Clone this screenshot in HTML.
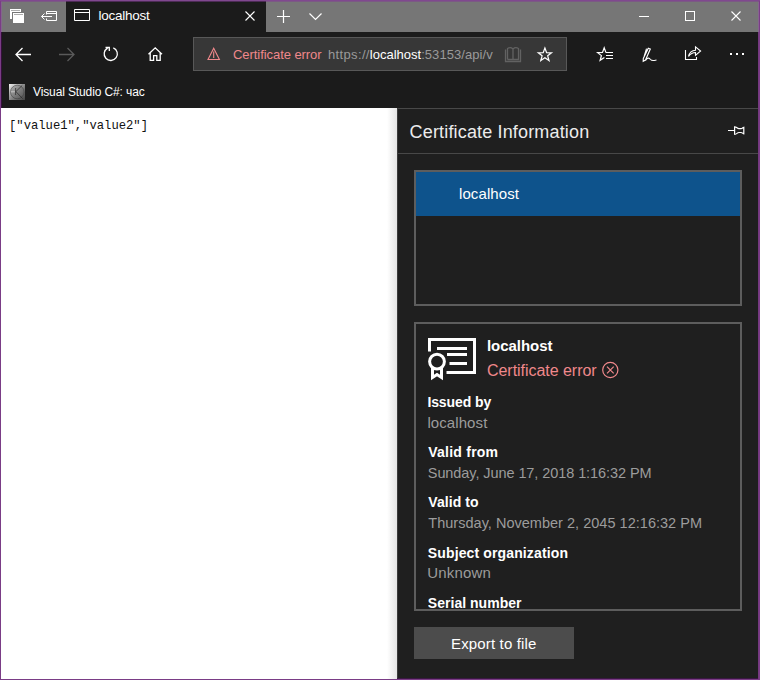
<!DOCTYPE html>
<html><head><meta charset="utf-8"><title>localhost</title>
<style>
html,body{margin:0;padding:0;background:#fff;}
body{width:760px;height:681px;overflow:hidden;position:relative;font-family:"Liberation Sans",sans-serif;}
.a{position:absolute;}
.t{position:absolute;white-space:nowrap;line-height:1;}
svg{position:absolute;left:0;top:0;overflow:visible;}
</style></head><body>
<!-- window frame -->
<div class="a" id="win" style="left:0;top:0;width:760px;height:680px;background:#7a3c86;"></div>
<div class="a" style="left:0;top:0;width:760px;height:1px;background:#80488f;"></div>
<!-- title bar gray -->
<div class="a" style="left:1px;top:1px;width:758px;height:31px;background:#767676;"></div>
<!-- active tab + toolbar dark -->
<div class="a" style="left:66px;top:1px;width:200px;height:31px;background:#1b1b1b;"></div>
<div class="a" style="left:1px;top:32px;width:758px;height:76px;background:#1b1b1b;"></div>
<!-- page -->
<div class="a" style="left:1px;top:108px;width:396px;height:571px;background:#fff;"></div>
<div class="a" style="left:387px;top:108px;width:10px;height:571px;background:linear-gradient(to right,#fff,#e5e5e5);"></div>
<div class="t" id="json" style="left:9px;top:119.6px;font-family:'Liberation Mono',monospace;font-size:12.2px;color:#111;">["value1","value2"]</div>
<!-- address bar -->
<div class="a" style="left:193px;top:37px;width:374px;height:34px;box-sizing:border-box;background:#373737;border:1px solid #585858;"></div>
<div class="t" id="cerr1" style="left:233px;top:48px;font-size:13px;color:#f0888b;letter-spacing:-0.06px;">Certificate error</div>
<div class="t" id="url" style="left:328px;top:48px;font-size:13px;color:#9a9a9a;"><span id="u1" style="letter-spacing:0.35px">https://</span><span id="u2" style="color:#fff">localhost</span><span id="u3" style="letter-spacing:0.07px">:53153/api/v</span></div>
<!-- tab title -->
<div class="t" id="tabt" style="left:98.6px;top:8.5px;font-size:13.5px;color:#fff;letter-spacing:-0.28px;">localhost</div>
<!-- bookmark -->
<div class="a" style="left:9px;top:84px;width:16px;height:16px;background:linear-gradient(135deg,#f4f4f4 0%,#b4b4b4 28%,#7c7c7c 58%,#404040 100%);"></div>
<div class="t" id="bm" style="left:33px;top:86px;font-size:12px;color:#fff;letter-spacing:-0.12px;">Visual Studio C#: час</div>
<!-- panel -->
<div class="a" style="left:397px;top:108px;width:362px;height:571px;background:#1f1f1f;"></div>
<div class="a" style="left:397px;top:108px;width:362px;height:1px;background:#484848;"></div>
<div class="a" style="left:397px;top:108px;width:1px;height:571px;background:#3c3c3c;"></div>
<div class="a" style="left:398px;top:153px;width:361px;height:1px;background:#484848;"></div>
<div class="t" id="hdr" style="left:409.6px;top:123px;font-size:18px;color:#ececec;letter-spacing:0.16px;">Certificate Information</div>
<!-- chain list -->
<div class="a" style="left:414px;top:170px;width:328px;height:136px;box-sizing:border-box;border:2px solid #5d5d5d;"></div>
<div class="a" style="left:416px;top:172px;width:324px;height:44px;background:#0e538c;"></div>
<div class="t" id="l1" style="left:459px;top:186px;font-size:15px;color:#fff;letter-spacing:0.09px;">localhost</div>
<!-- details -->
<div class="a" style="left:414px;top:322px;width:328px;height:289px;box-sizing:border-box;border:2px solid #5d5d5d;overflow:hidden;">
</div>
<div class="t" id="d0" style="left:487px;top:338px;font-size:15px;font-weight:bold;color:#fff;letter-spacing:-0.05px;">localhost</div>
<div class="t" id="d1" style="left:487px;top:363px;font-size:16px;color:#f0888b;letter-spacing:-0.04px;">Certificate error</div>
<div class="t" id="k1" style="left:427.4px;top:395px;font-size:14px;font-weight:bold;color:#fff;letter-spacing:-0.1px;">Issued by</div>
<div class="t" id="v1" style="left:427.4px;top:415px;font-size:15px;color:#9c9c9c;letter-spacing:0.09px;">localhost</div>
<div class="t" id="k2" style="left:428.3px;top:445px;font-size:14px;font-weight:bold;color:#fff;letter-spacing:0.23px;">Valid from</div>
<div class="t" id="v2" style="left:427.8px;top:466px;font-size:14.5px;color:#9c9c9c;letter-spacing:-0.08px;">Sunday, June 17, 2018 1:16:32 PM</div>
<div class="t" id="k3" style="left:428.3px;top:495px;font-size:14px;font-weight:bold;color:#fff;letter-spacing:0.07px;">Valid to</div>
<div class="t" id="v3" style="left:428.3px;top:516px;font-size:14.5px;color:#9c9c9c;letter-spacing:0.02px;">Thursday, November 2, 2045 12:16:32 PM</div>
<div class="t" id="k4" style="left:427.8px;top:546px;font-size:14px;font-weight:bold;color:#fff;letter-spacing:0.13px;">Subject organization</div>
<div class="t" id="v4" style="left:427.3px;top:565px;font-size:15px;color:#9c9c9c;letter-spacing:0.18px;">Unknown</div>
<div class="t" id="k5" style="left:427.8px;top:596px;font-size:14px;font-weight:bold;color:#fff;height:13px;overflow:hidden;letter-spacing:0.03px;">Serial number</div>
<!-- button -->
<div class="a" style="left:414px;top:627px;width:160px;height:32px;background:#4c4c4c;"></div>
<div class="t" id="btn" style="left:451px;top:636px;font-size:15px;color:#fff;letter-spacing:0.15px;">Export to file</div>
<div class="a" style="left:1px;top:1px;width:758px;height:1px;background:rgba(128,60,145,.5);"></div>
<div class="a" style="left:758px;top:2px;width:1px;height:30px;background:rgba(150,80,170,.5);"></div>
<div class="a" style="left:758px;top:32px;width:1px;height:647px;background:#74397f;"></div>
<div class="a" style="left:1px;top:2px;width:1px;height:30px;background:rgba(150,80,170,.45);"></div>
<div class="a" style="left:1px;top:32px;width:1px;height:76px;background:rgba(70,10,80,.6);"></div>
<div class="a" style="left:397px;top:678px;width:361px;height:1px;background:#3a1742;"></div>
<!-- ICONS -->
<svg id="icons" width="760" height="681" viewBox="0 0 760 681" fill="none" stroke="#fff" stroke-width="1">
<!-- favicon detail -->
<g stroke-width="1">
<circle cx="17.3" cy="92" r="6.8" fill="#6a6a6a" fill-opacity=".3" stroke="#333" stroke-opacity=".7" stroke-width=".7"/>
<path d="M10.8 91.7H15" stroke="#c8c8c8" stroke-opacity=".7" stroke-width="1.3"/>
<path d="M15.6 88V95M22.3 85.3L15.9 91.6L22.6 98.6" stroke="#222" stroke-opacity=".75" stroke-width=".9"/>
</g>
<!-- tabs icon -->
<g stroke="none" fill="#fff">
<rect x="10" y="9" width="11" height="10"/>
<rect x="12" y="12" width="13" height="12" fill="#767676"/>
<rect x="13" y="13" width="11" height="10"/>
<rect x="11" y="10" width="9" height="1" fill="#767676" opacity=".6"/>
<rect x="14" y="14" width="9" height="1" fill="#767676" opacity=".6"/>
</g>
<!-- set aside icon -->
<path d="M46.5 14.5V11.5H56.5V20.5H46.5V18.5M46.5 13.5H56.5M41.5 16.5H52M44.5 13.5L41.5 16.5L44.5 19.5" />
<!-- tab page icon -->
<path d="M74.5 9.5H89.5V20.5H74.5ZM74.5 12.5H89.5"/>
<!-- tab close -->
<path d="M245.5 11.5L254.5 20.5M254.5 11.5L245.5 20.5" stroke-width="1.1"/>
<!-- new tab plus -->
<path d="M277 16.5H290M283.5 10V23" stroke-width="1.2"/>
<!-- chevron -->
<path d="M309.5 13.5L315.5 19.5L321.5 13.5" stroke-width="1.2"/>
<!-- window controls -->
<path d="M639 16.5H649"/>
<rect x="685.5" y="11.5" width="9" height="9"/>
<path d="M731.5 11.5L740.5 20.5M740.5 11.5L731.5 20.5" stroke-width="1.1"/>
<!-- back -->
<path d="M16 54.5H31M22.5 48L16 54.5L22.5 61" stroke-width="1.3"/>
<!-- forward -->
<path d="M59 54.5H74M67.5 48L74 54.5L67.5 61" stroke-width="1.3" stroke="#5a5a5a"/>
<!-- refresh -->
<path d="M113.3 47.8A6.6 6.6 0 1 1 107.6 48.1M105.5 47.5H109.3V51" stroke-width="1.3"/>
<!-- home -->
<path d="M148.5 54.2L155.2 47.8L162 54.2M150.2 53V60.3H153.6V55.6H156.8V60.3H160.2V53" stroke-width="1.3"/>
<!-- warning -->
<path d="M213.7 48.2L219.4 59.5H208L213.7 48.2ZM213.7 51.5V58" stroke="#f0888b" stroke-width="1.1"/>
<!-- book -->
<g stroke="#626262" stroke-width="1.3">
<path d="M505.5 49.5V61.5H520.5V49.5M507.5 59.5V48.5C509.5 47.3 511.5 47.6 513 49C514.5 47.6 516.5 47.3 518.5 48.5V59.5H507.5M513 49V59.5" />
</g>
<!-- star -->
<path d="M544.9 48.0L546.6 52.6L551.5 52.8L547.7 55.8L549.0 60.5L544.9 57.8L540.8 60.5L542.1 55.8L538.3 52.8L543.2 52.6Z" stroke-width="1.25" stroke-linejoin="miter"/>
<!-- fav list -->
<path d="M606 52.5L605.9 52.4L604.2 47.8L602.5 52.4L597.6 52.6L601.4 55.6L600.1 60.3L604.4 57.5M606 52.5H613M606 55.5H613M606 58.5H613" stroke-width="1.2"/>
<!-- pen -->
<path d="M648.3 48.2L650.3 49L645.5 60L643.2 61.2L643.3 58.5ZM646.5 48.7L644 57M645.5 60.5C647.5 57.5 649 57.5 650.5 59.5C652 61.3 654 60.5 656.5 60" stroke-width="1.15"/>
<!-- share -->
<path d="M685.5 50V59.5H696.5V57M688.5 56.5C689.5 52.5 692 50.5 695.5 50.3V46.8L700.6 51L695.5 55.4V52.5C692.5 52.5 690.5 53.8 688.5 56.5Z" stroke-width="1.1"/>
<!-- dots -->
<g stroke="none" fill="#fff"><rect x="730" y="53" width="2" height="2"/><rect x="736" y="53" width="2" height="2"/><rect x="742" y="53" width="2" height="2"/></g>
<!-- pin -->
<path d="M728 130.5H734M734.6 126.3V134.8M734.6 126.8C737 127 737 128.6 739 128.6H741C742.5 128.6 742.5 127.5 743.8 127.3V133.8C742.5 133.6 742.5 132.5 741 132.5H739C737 132.5 737 134.2 734.6 134.4" stroke-width="1.2"/>
<!-- cert icon -->
<g>
<path d="M429.5 351.5V339.5H474.5V372.5H446.5" stroke-width="3"/>
<path d="M437 348.5H467M447 354.5H467M449.5 363.5H467" stroke-width="3"/>
<circle cx="437" cy="361.6" r="7.4" stroke-width="3"/>
<path d="M432.5 368V377.5L437 374.5L441.5 377.5V368" stroke-width="3" stroke-linejoin="miter"/>
</g>
<!-- error circle -->
<g stroke="#f0888b" stroke-width="1.2"><circle cx="610.3" cy="370" r="7.6"/><path d="M607 366.7L613.7 373.4M613.7 366.7L607 373.4"/></g>
</svg>
</body></html>
